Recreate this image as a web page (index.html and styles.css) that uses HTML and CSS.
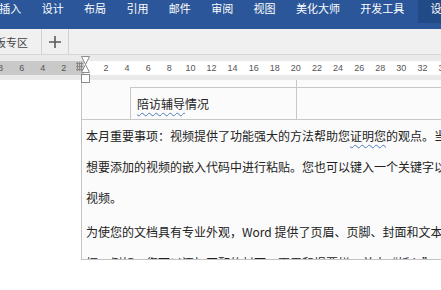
FILE: index.html
```html
<!DOCTYPE html>
<html lang="zh-CN">
<head>
<meta charset="utf-8">
<title>Word</title>
<link rel="stylesheet" href="styles.css">
</head>
<body>
<div class="app">
  <nav class="ribbon-tabs">
    <span class="rtab first">插入</span>
    <span class="rtab">设计</span>
    <span class="rtab">布局</span>
    <span class="rtab">引用</span>
    <span class="rtab">邮件</span>
    <span class="rtab">审阅</span>
    <span class="rtab">视图</span>
    <span class="rtab">美化大师</span>
    <span class="rtab">开发工具</span>
    <span class="rtab context">设计</span>
  </nav>

  <div class="doc-tabs">
    <div class="doc-tab">模板专区</div>
    <div class="doc-tab add">
      <svg width="14" height="14" viewBox="0 0 14 14"><path d="M1 7H13M7 1V13" stroke="#5a5a5a" stroke-width="1.6" fill="none"/></svg>
    </div>
  </div>

  <div class="ruler-area">
    <div class="ruler">
      <span class="tick">8</span><span class="tick">6</span><span class="tick">4</span><span class="tick">2</span><span class="tick"></span><span class="tick">2</span><span class="tick">4</span><span class="tick">6</span><span class="tick">8</span><span class="tick">10</span><span class="tick">12</span><span class="tick">14</span><span class="tick">16</span><span class="tick">18</span><span class="tick">20</span><span class="tick">22</span><span class="tick">24</span><span class="tick">26</span><span class="tick">28</span><span class="tick">30</span><span class="tick">32</span><span class="tick">34</span>
    </div>
    <svg class="grid-handle" width="7" height="9" viewBox="0 0 7 9">
      <path d="M0 1.5H7M0 4.5H7M0 7.5H7M1.5 0V9M3.5 0V9M5.5 0V9" stroke="#8a8a8a" stroke-width="1" fill="none"/>
    </svg>
    <svg class="indent-marker" width="11" height="28" viewBox="0 0 11 28">
      <path d="M1.5 0.5H9.5L5.5 8.5Z" fill="#fff" stroke="#8c8c8c"/>
      <path d="M5.5 8.5L1.5 16.5H9.5Z" fill="#fff" stroke="#8c8c8c"/>
      <rect x="1.5" y="18.5" width="8" height="8" fill="#fff" stroke="#8c8c8c"/>
    </svg>
  </div>

  <main class="canvas">
    <div class="page">
      <div class="head-row">
        <div class="cell c1"></div>
        <div class="cell c2"><span class="wavy">陪访辅导</span>情况</div>
        <div class="cell c3"></div>
      </div>
      <div class="body-text">
        <p>本月重要事项：视频提供了功能强大的方法帮助您<span class="wavy">证明您</span>的观点。当您单击联机视频时，可以在<br>想要添加的视频的嵌入代码中进行粘贴。您也可以键入一个关键字以联机搜索最适合您的文档的<br>视频。</p>
        <p>为使您的文档具有专业外观，Word 提供了页眉、页脚、封面和文本<br>框。例如，您可以添加匹配的封面、页眉和提要栏。单击“插入”，然后从不同库中选择所需元素。</p>
      </div>
    </div>
  </main>
</div>
</body>
</html>
```

FILE: styles.css
```css
html, body {
  margin: 0;
  padding: 0;
}

body {
  width: 441px;
  height: 290px;
  overflow: hidden;
  background: #ffffff;
  font-family: "Noto Sans CJK SC", "Noto Sans", sans-serif;
}

.app {
  position: relative;
  width: 441px;
  height: 290px;
  display: flex;
  flex-direction: column;
  overflow: hidden;
}

/* ribbon tabs */
.ribbon-tabs {
  flex: none;
  height: 29px;
  background: #2b579a;
  display: flex;
  align-items: flex-start;
  white-space: nowrap;
}

.rtab {
  flex: none;
  height: 23px;
  padding: 0 10.2px;
  color: #ffffff;
  font-size: 11px;
  line-height: 16px;
}

.rtab.first {
  margin-left: -10.9px;
}

.rtab.context {
  margin-left: 4px;
  padding-left: 12px;
  background: #214a86;
}

/* document tabs */
.doc-tabs {
  flex: none;
  box-sizing: border-box;
  height: 26px;
  background: #f0f0f0;
  border-bottom: 1px solid #d6d6d6;
  display: flex;
}

.doc-tab {
  flex: none;
  display: flex;
  align-items: center;
  justify-content: center;
  padding: 0 13px;
  font-size: 11px;
  color: #444444;
  border-right: 1px solid #d2d2d2;
}

.doc-tab:first-child {
  margin-left: -29px;
}

.doc-tab.add {
  width: 26px;
  padding: 0;
}

/* ruler */
.ruler-area {
  flex: none;
  height: 25px;
  box-sizing: border-box;
  padding-top: 6px;
  background: #eaeaea;
}

.ruler {
  height: 14px;
  display: flex;
  margin-left: -10px;
  background: linear-gradient(to right, #c9c9c9 94px, #ffffff 94px);
}

.tick {
  flex: none;
  width: 21.1px;
  text-align: center;
  font-family: "Liberation Sans", sans-serif;
  font-size: 9px;
  line-height: 14px;
  color: #555555;
}

.grid-handle {
  position: absolute;
  left: 76px;
  top: 62px;
}

.indent-marker {
  position: absolute;
  left: 80px;
  top: 56px;
}

/* document canvas */
.canvas {
  flex: 1;
  background: #ffffff;
  padding-left: 81px;
}

.page {
  box-sizing: border-box;
  height: 180px;
  border-left: 1px solid #c4c4c4;
  border-bottom: 1px solid #c4c4c4;
  background: #fbfbfb;
  overflow: hidden;
  color: #222222;
  font-size: 12px;
}

.head-row {
  height: 39px;
  border-bottom: 1px solid #c8c8c8;
  display: flex;
}

.cell.c1 {
  flex: none;
  width: 48px;
}

.cell.c2 {
  flex: none;
  box-sizing: border-box;
  width: 166px;
  margin-top: 7px;
  border-top: 1px solid #c8c8c8;
  border-left: 1px solid #c8c8c8;
  padding-left: 6px;
  display: flex;
  align-items: center;
  white-space: nowrap;
}

.cell.c3 {
  flex: 1;
  border-left: 1px solid #c8c8c8;
  background: linear-gradient(#c8c8c8, #c8c8c8) 0 7px / 100% 1px no-repeat;
}

.wavy {
  text-decoration: underline wavy #4a7cc0;
  text-decoration-thickness: 1px;
  text-underline-offset: 3px;
}

.body-text {
  padding-left: 4px;
  white-space: nowrap;
}

.body-text p {
  margin: 0 0 3px;
  line-height: 31px;
}
```
